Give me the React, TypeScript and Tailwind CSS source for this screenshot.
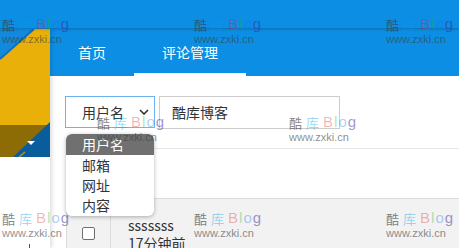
import React from "react";

const marks = [
  "left-[2px] top-[15px]",
  "left-[194px] top-[15px]",
  "left-[386px] top-[15px]",
  "left-[97px] top-[113px]",
  "left-[289px] top-[113px]",
  "left-[2px] top-[209px]",
  "left-[194px] top-[209px]",
  "left-[386px] top-[209px]",
];

function Watermark({ pos }: { pos: string }) {
  return (
    <div className={`absolute ${pos} pointer-events-none select-none leading-none z-50`}>
      <div className="flex items-end gap-[4px] text-[13px] h-[16px]">
        <span className="text-[rgba(60,60,60,0.65)]">酷</span>
        <span className="text-[rgba(0,160,233,0.4)]">库</span>
        <span className="font-['Liberation_Sans',sans-serif] text-[15px] tracking-[1px]">
          <span className="text-[rgba(220,20,20,0.32)]">B</span>
          <span className="text-[rgba(0,190,40,0.35)]">l</span>
          <span className="text-[rgba(0,120,230,0.35)]">o</span>
          <span className="text-[rgba(60,40,160,0.5)]">g</span>
        </span>
      </div>
      <div className="mt-[3px] font-['Liberation_Sans',sans-serif] text-[11px] text-[rgba(60,60,60,0.6)]">
        www.zxki.cn
      </div>
    </div>
  );
}

function Avatar() {
  return (
    <svg width="50" height="128" viewBox="0 0 50 128" className="block">
      <rect width="50" height="128" fill="#e9b00a" />
      <polygon points="0,0 34,0 0,30" fill="#1389dd" />
      <line x1="34" y1="0" x2="0" y2="30" stroke="#0e70bb" strokeWidth="2" />
      <rect y="96" width="50" height="32" fill="#8d6b05" />
      <polygon points="50,93 50,128 13,128" fill="#0a5d9c" />
      <line x1="25" y1="123" x2="19" y2="128" stroke="#b89212" strokeWidth="1.5" />
      <polygon points="27,112 35,112 31,116" fill="#ffffff" />
    </svg>
  );
}

export default function App() {
  return (
    <div className="relative w-[459px] h-[248px] overflow-hidden bg-white font-['Noto_Sans_CJK_SC','Liberation_Sans',sans-serif] text-[#333]">
      <header className="relative z-20 h-[29px] bg-[#0d8ee5] border-b border-[#0b78c2] shadow-[0_1px_2px_rgba(0,0,0,0.15)]" />

      <div className="flex h-[219px]">
        <aside className="relative z-10 w-[50px] shrink-0 bg-white shadow-[2px_0_4px_rgba(0,0,0,0.13)]">
          <Avatar />
          <div className="ml-[29px] mt-[87px] w-px h-[5px] bg-[#555]" />
        </aside>

        <main className="flex-1 flex flex-col min-h-0 overflow-hidden">
          <nav className="shrink-0 h-[47px] bg-[#0d8ee5] flex text-white text-[14px]">
            <a className="px-7 flex items-center">首页</a>
            <a className="relative px-7 flex items-center">
              评论管理
              <span className="absolute left-0 right-0 bottom-0 h-[3px] bg-white" />
            </a>
          </nav>

          <div className="shrink-0 pl-[15px] pt-[20px] flex gap-[4px]">
            <div className="w-[90px] h-[32px] border border-[#6cb4f0] flex items-center justify-between pl-[16px] pr-[5px] text-[14px]">
              <span>用户名</span>
              <svg width="10" height="6" viewBox="0 0 10 6">
                <polyline points="1,1 5,5 9,1" fill="none" stroke="#333" strokeWidth="1.6" />
              </svg>
            </div>
            <div className="w-[181px] h-[33px] border border-[#ccc] flex items-center pl-[12px] text-[14px]">
              酷库博客
            </div>
          </div>

          <div className="shrink-0 ml-[16px] mt-[19px] border-t border-[#e6e6e6] h-[50px]" />

          <div className="shrink-0 ml-[16px] h-[80px] bg-[#f2f2f2] border-t border-l border-[#ddd] flex">
            <div className="w-[44px] border-r border-[#ddd] flex justify-center pt-[28px]">
              <div className="w-[13px] h-[13px] border border-[#707070] rounded-[2px] bg-white" />
            </div>
            <div className="pl-[17px] pt-[17px] text-[14px] leading-[18px]">
              <div>sssssss</div>
              <div>17分钟前</div>
            </div>
          </div>
        </main>
      </div>

      <ul className="absolute left-[66px] top-[134px] w-[88px] bg-white rounded-[6px] shadow-[0_1px_4px_rgba(0,0,0,0.3)] text-[14px] z-30 overflow-hidden pb-[1px]">
        <li className="h-[21px] bg-[#707070] text-white pl-[16px] flex items-center">用户名</li>
        <li className="h-[20px] pl-[16px] flex items-center">邮箱</li>
        <li className="h-[20px] pl-[16px] flex items-center">网址</li>
        <li className="h-[20px] pl-[16px] flex items-center">内容</li>
      </ul>

      {marks.map((m) => (
        <Watermark key={m} pos={m} />
      ))}
    </div>
  );
}
